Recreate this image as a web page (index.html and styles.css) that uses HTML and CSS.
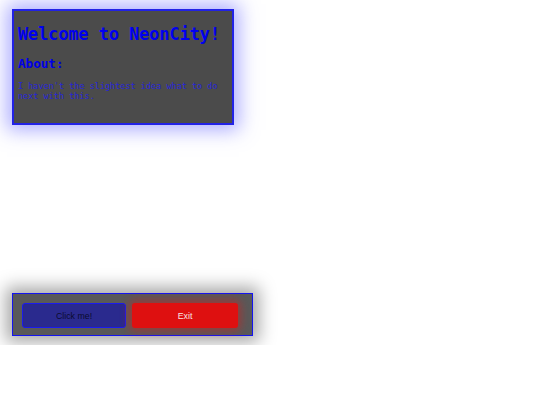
FILE: index.html
```html
<!DOCTYPE html>
<html>
<head>
<meta charset="utf-8">
<link rel="stylesheet" href="styles.css">
</head>
<body>
<div class="page">
  <section class="welcome">
    <h1 class="title">Welcome to NeonCity!</h1>
    <h2 class="subtitle">About:</h2>
    <p class="about">I haven't the slightest idea what to do next with this.</p>
  </section>
  <div class="controls">
    <button class="btn btn-click">Click me!</button>
    <button class="btn btn-exit">Exit</button>
  </div>
</div>
</body>
</html>
```
FILE: styles.css
```css
html, body {
  margin: 0;
  padding: 0;
  background: #ffffff;
}
.page {
  display: flex;
  flex-direction: column;
  align-items: flex-start;
  padding: 9px 12px;
}
.welcome {
  box-sizing: border-box;
  width: 222px;
  height: 116px;
  background: #4b4b4b;
  border: 2px solid #2222e6;
  box-shadow: 0 0 18px 5px rgba(90, 90, 255, 0.5);
  padding: 0 3px;
  font-family: "DejaVu Sans Mono", monospace;
  font-size: 8.5px;
  color: #0000e6;
}
.title {
  font-size: 16.8px;
  font-weight: bold;
  margin: 13px 0 0 1px;
  line-height: 20px;
  color: #0000f0;
  white-space: nowrap;
}
.subtitle {
  font-size: 12.6px;
  font-weight: bold;
  margin: 12px 0 0 1px;
  line-height: 15px;
  color: #0000e6;
}
.about {
  margin: 10px 0 0 1px;
  line-height: 10px;
  color: #2626d8;
}
.controls {
  box-sizing: border-box;
  margin-top: 168px;
  width: 241px;
  height: 43px;
  display: flex;
  gap: 6px;
  padding: 9px 0 0 9px;
  background: #595959;
  border: 1px solid #1414f0;
  box-shadow: 0 0 16px 6px rgba(0, 0, 0, 0.35);
}
.btn {
  box-sizing: border-box;
  height: 25px;
  font-family: "Liberation Sans", Arial, sans-serif;
  font-size: 8.8px;
  border-radius: 3px;
  padding: 0;
}
.btn-click {
  width: 104px;
  background: #2a2a8e;
  border: 1px solid #1a1af0;
  color: #0a0a2e;
}
.btn-exit {
  width: 106px;
  background: #de1010;
  border: none;
  color: #f8e4e4;
  box-shadow: 0 0 8px 3px rgba(230, 20, 20, 0.45);
}
```
